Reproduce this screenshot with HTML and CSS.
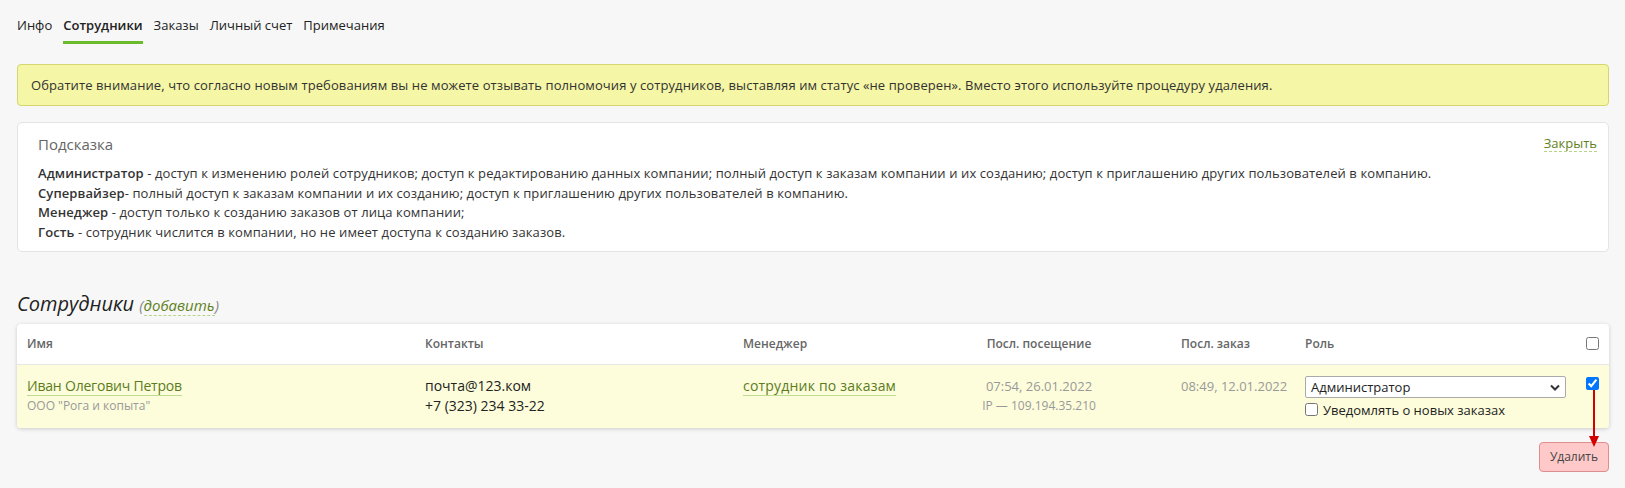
FILE: index.html
```html
<!DOCTYPE html>
<html lang="ru">
<head>
<meta charset="utf-8">
<title>Сотрудники</title>
<link rel="stylesheet" href="styles.css">
</head>
<body>
<div class="page">
  <nav class="tabs">
    <a class="tab">Инфо</a>
    <a class="tab tab-active">Сотрудники</a>
    <a class="tab">Заказы</a>
    <a class="tab">Личный счет</a>
    <a class="tab">Примечания</a>
  </nav>

  <div class="alert">Обратите внимание, что согласно новым требованиям вы не можете отзывать полномочия у сотрудников, выставляя им статус «не проверен». Вместо этого используйте процедуру удаления.</div>

  <section class="hint">
    <div class="hint-head">
      <span class="hint-title">Подсказка</span>
      <a class="link-dashed">Закрыть</a>
    </div>
    <p class="hint-line"><b>Администратор</b> - доступ к изменению ролей сотрудников; доступ к редактированию данных компании; полный доступ к заказам компании и их созданию; доступ к приглашению других пользователей в компанию.</p>
    <p class="hint-line"><b>Супервайзер</b>- полный доступ к заказам компании и их созданию; доступ к приглашению других пользователей в компанию.</p>
    <p class="hint-line"><b>Менеджер</b> - доступ только к созданию заказов от лица компании;</p>
    <p class="hint-line"><b>Гость</b> - сотрудник числится в компании, но не имеет доступа к созданию заказов.</p>
  </section>

  <h2 class="section-title">Сотрудники <span class="add">(<a class="link-dashed">добавить</a>)</span></h2>

  <div class="staff">
    <div class="card">
      <div class="grid grid-head">
        <div class="cell">Имя</div>
        <div class="cell">Контакты</div>
        <div class="cell">Менеджер</div>
        <div class="cell cell-center">Посл. посещение</div>
        <div class="cell cell-order">Посл. заказ</div>
        <div class="cell">Роль</div>
        <div class="cell cell-check"><input type="checkbox" class="cb"></div>
      </div>
      <div class="grid grid-row">
        <div class="cell">
          <a class="link-solid name">Иван Олегович Петров</a>
          <div class="muted small">ООО "Рога и копыта"</div>
        </div>
        <div class="cell contacts">
          <div>почта@123.ком</div>
          <div>+7 (323) 234 33-22</div>
        </div>
        <div class="cell">
          <a class="link-solid manager">сотрудник по заказам</a>
        </div>
        <div class="cell cell-center">
          <div class="muted date">07:54, 26.01.2022</div>
          <div class="muted small">IP — 109.194.35.210</div>
        </div>
        <div class="cell cell-order">
          <div class="muted date">08:49, 12.01.2022</div>
        </div>
        <div class="cell role">
          <div class="select-wrap">
            <select class="select">
              <option>Администратор</option>
              <option>Супервайзер</option>
              <option>Менеджер</option>
              <option>Гость</option>
            </select>
            <svg class="chev" width="10" height="7" viewBox="0 0 10 7"><path d="M1 1.5 L5 5.5 L9 1.5" fill="none" stroke="#333" stroke-width="2"/></svg>
          </div>
          <label class="notify"><input type="checkbox" class="cb"> Уведомлять о новых заказах</label>
        </div>
        <div class="cell cell-check"><input type="checkbox" class="cb" checked></div>
      </div>
    </div>
    <div class="actions">
      <button class="btn-delete">Удалить</button>
    </div>
    <svg class="arrow" width="12" height="58" viewBox="0 0 12 58">
      <line x1="6" y1="0" x2="6" y2="48" stroke="#d40000" stroke-width="2"/>
      <path d="M1 46 L11 46 L6 57 Z" fill="#d40000"/>
    </svg>
  </div>
</div>
</body>
</html>
```

FILE: styles.css
```css
* { box-sizing: border-box; }
html, body { margin: 0; padding: 0; }
body {
  background: #f7f7f7;
  font-family: "Open Sans", "Noto Sans", sans-serif;
  font-size: 13px;
  color: #333;
}
.page {
  padding: 0 16px 0 17px;
}
.tabs {
  display: flex;
  gap: 11px;
}
.tab {
  padding: 16px 0 7px;
  line-height: 18px;
  font-size: 13px;
  color: #222;
  border-bottom: 3px solid transparent;
}
.tab-active {
  font-weight: 600;
  border-bottom-color: #6cbb2a;
}
.alert {
  margin-top: 20px;
  background: #f5f6a6;
  border: 1px solid #d5d66d;
  border-radius: 4px;
  padding: 11px 13px;
  line-height: 18px;
  color: #333;
  letter-spacing: 0.09px;
}
.hint {
  margin-top: 16px;
  background: #fff;
  border: 1px solid #e4e4e4;
  border-radius: 5px;
  padding: 11px 11px 8px 20px;
}
.hint-head {
  display: flex;
  justify-content: space-between;
  align-items: center;
  line-height: 20px;
  margin-bottom: 10px;
}
.hint-title {
  font-size: 15px;
  color: #666;
}
.hint-line {
  margin: 0;
  line-height: 19.7px;
  letter-spacing: 0.1px;
}
.hint-line b { font-weight: 600; color: #333; }
.link-dashed {
  color: #5f811c;
  border-bottom: 1px dashed #b7d58a;
  line-height: 1.2;
}
.section-title {
  margin: 39px 0 6px;
  font-size: 20px;
  font-weight: 400;
  font-style: italic;
  line-height: 26px;
  color: #222;
}
.add {
  font-size: 15px;
  color: #888;
}
.staff {
  position: relative;
}
.card {
  background: #fff;
  border-radius: 4px;
  box-shadow: 0 1px 4px rgba(0,0,0,0.18);
  overflow: hidden;
}
.grid {
  display: grid;
  grid-template-columns: 398px 318px 197px 198px 167px 281px 13px;
  padding: 0 10px;
}
.grid-head {
  height: 41px;
  align-items: center;
  font-size: 12px;
  font-weight: 600;
  color: #666;
  border-bottom: 1px solid #e6e6e6;
}
.grid-row {
  height: 63px;
  background: #fdfddb;
  padding-top: 11px;
  align-items: start;
}
.cell-center { text-align: center; }
.cell-order { padding-left: 43px; }
.cell-check { display: flex; }
.grid-row .cell-check { padding-top: 1px; }
.cb {
  margin: 0;
  width: 13px;
  height: 13px;
}
.link-solid {
  color: #5b7c1d;
  border-bottom: 1px solid #bddc91;
}
.name {
  font-size: 14px;
  line-height: 19px;
  display: inline-block;
  letter-spacing: -0.2px;
}
.manager {
  font-size: 14px;
  line-height: 19px;
  display: inline-block;
  letter-spacing: 0.2px;
}
.small {
  font-size: 12px;
  line-height: 19px;
}
.muted { color: #999; }
.date {
  font-size: 13px;
  line-height: 20px;
}
.contacts {
  font-size: 14px;
  line-height: 20px;
  color: #222;
}
.select-wrap {
  position: relative;
  width: 261px;
}
.select {
  appearance: none;
  -webkit-appearance: none;
  width: 261px;
  height: 22px;
  border: 1px solid #aaa;
  border-radius: 2px;
  background: #fff;
  font-family: inherit;
  font-size: 13px;
  color: #222;
  padding: 0 20px 0 5px;
  line-height: 20px;
}
.chev {
  position: absolute;
  right: 6px;
  top: 8px;
  pointer-events: none;
}
.notify {
  display: flex;
  align-items: center;
  gap: 5px;
  margin-top: 4px;
  font-size: 13px;
  line-height: 16px;
  color: #222;
}
.actions {
  display: flex;
  justify-content: flex-end;
  margin-top: 14px;
}
.btn-delete {
  width: 70px;
  height: 30px;
  background: #ffc9c9;
  border: 1px solid #df8e8e;
  border-radius: 4px;
  font-family: inherit;
  font-size: 12px;
  color: #444;
  padding: 0;
}
.arrow {
  position: absolute;
  right: 9px;
  top: 66px;
}
```
